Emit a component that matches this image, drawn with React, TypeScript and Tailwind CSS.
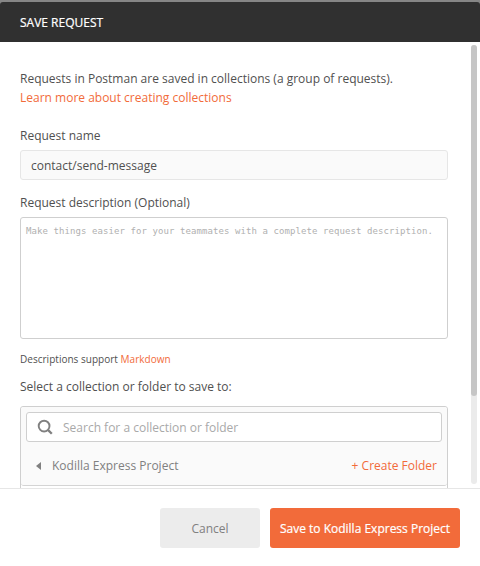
import React from "react";

function Header() {
  return (
    <header className="h-[42px] shrink-0 bg-[#868686] pt-[2px]">
      <div className="flex h-10 items-center rounded-t-[3px] bg-[#303030] px-5 pt-[2px] text-white">
        <h1 className="text-[12px] leading-4 [-webkit-text-stroke:0.2px_white]">SAVE REQUEST</h1>
      </div>
    </header>
  );
}

function SearchIcon() {
  return (
    <svg width="16" height="16" viewBox="0 0 16 16" fill="none" stroke="#808080" className="shrink-0">
      <circle cx="7.1" cy="7.1" r="5.4" strokeWidth="1.9" />
      <path d="M10.9 10.9L14.8 14.8" strokeWidth="2.3" />
    </svg>
  );
}

function CollectionPicker() {
  return (
    <div className="mt-[11px] h-[200px] shrink-0 rounded-[3px] border border-[#cfcfcf] bg-white">
      <div className="h-[79px] rounded-[3px] border-b border-[#d4d4d4] bg-[#fafafa] px-[5px] pt-[5px]">
        <div className="flex h-[30px] items-center rounded-[3px] border border-[#cfcfcf] bg-white pl-[10px]">
          <SearchIcon />
          <span className="ml-[10px] pt-[2px] text-[#a9a9a9]">Search for a collection or folder</span>
        </div>
        <div className="mt-4 flex items-center pr-[5px] pl-[10px]">
          <svg width="5" height="8" viewBox="0 0 5 8" fill="#808080">
            <path d="M5 0V8L0 4Z" />
          </svg>
          <span className="ml-[11px] text-[#808080]">Kodilla Express Project</span>
          <span className="ml-auto text-[#f26b3a]">+ Create Folder</span>
        </div>
      </div>
    </div>
  );
}

function Scrollbar() {
  return (
    <div className="mt-[3px] mr-[3px] h-[439px] w-[6px] shrink-0 rounded-full bg-[#ebebeb]">
      <div className="h-[351px] rounded-full bg-[#c6c6c6]" />
    </div>
  );
}

export default function App() {
  return (
    <div className="flex h-[566px] w-[480px] flex-col overflow-hidden bg-white font-['Open_Sans',sans-serif] text-[12px] leading-4 text-[#505050]">
      <Header />
      <main className="flex h-[446px] shrink-0 justify-between overflow-hidden">
        <div className="flex h-[446px] w-[448px] flex-col overflow-hidden pt-[27px] pl-5">
          <p className="leading-[19px]">
            Requests in Postman are saved in collections (a group of requests).
            <br />
            <span className="text-[#f26b3a]">Learn more about creating collections</span>
          </p>
          <div className="mt-[21px]">Request name</div>
          <div className="mt-[6px] flex h-[30px] shrink-0 items-center rounded-[3px] border border-[#e6e6e6] bg-[#fafafa] px-[10px] pt-[2px]">
            contact/send-message
          </div>
          <div className="mt-[15px]">Request description (Optional)</div>
          <div className="mt-[6px] h-[122px] shrink-0 rounded-[3px] border border-[#cfcfcf] px-[5px] pt-[5px] font-['DejaVu_Sans_Mono',monospace] text-[9px] tracking-[0.08px] whitespace-nowrap text-[#b0b0b0]">
            Make things easier for your teammates with a complete request description.
          </div>
          <div className="mt-[12px] text-[10px] tracking-[0.02px]">
            Descriptions support <span className="text-[#f26b3a]">Markdown</span>
          </div>
          <div className="mt-[12px]">Select a collection or folder to save to:</div>
          <CollectionPicker />
        </div>
        <Scrollbar />
      </main>
      <footer className="flex h-[78px] shrink-0 justify-end gap-[10px] border-t border-[#e6e6e6] pt-[19px] pr-5">
        <button className="h-10 w-[100px] rounded-[3px] bg-[#ececec] pt-[2px] text-[#808080]">Cancel</button>
        <button className="h-10 w-[190px] rounded-[3px] bg-[#f26b3a] pt-[2px] whitespace-nowrap text-white [-webkit-text-stroke:0.2px_white]">
          Save to Kodilla Express Project
        </button>
      </footer>
    </div>
  );
}
